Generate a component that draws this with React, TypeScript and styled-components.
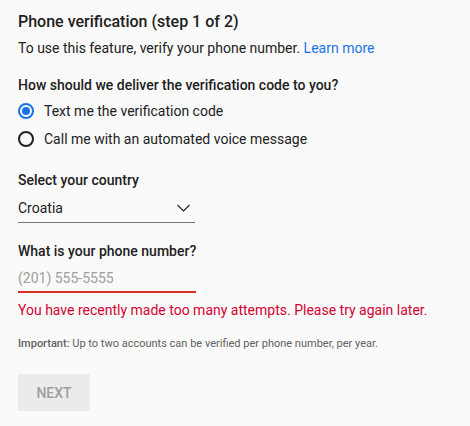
import styled, { createGlobalStyle } from "styled-components"

const GlobalStyle = createGlobalStyle`
  html, body {
    margin: 0;
    padding: 0;
    background: #fafafa;
  }
  body {
    font-family: Roboto, "Liberation Sans", Arial, sans-serif;
    color: #202124;
  }
`

const Page = styled.div`
  padding: 11px 18px 0 18px;
  display: flex;
  flex-direction: column;
`

const Title = styled.h1`
  margin: 0;
  font-size: 16px;
  font-weight: 500;
  line-height: 22px;
  color: #212121;
`

const Lead = styled.p`
  margin: 5px 0 0 0;
  font-size: 14px;
  line-height: 20px;
  color: #212121;

  a {
    color: #1a73e8;
    text-decoration: none;
  }
`

const Question = styled.h2<{ $top: number }>`
  margin: ${(p) => p.$top}px 0 0 0;
  font-size: 14px;
  font-weight: 500;
  line-height: 20px;
  color: #212121;
`

const RadioGroup = styled.div`
  display: flex;
  flex-direction: column;
  gap: 8px;
  margin-top: 6px;
`

const RadioRow = styled.label`
  display: flex;
  align-items: center;
  gap: 10px;
  font-size: 14px;
  line-height: 20px;
  color: #212121;
`

const RadioDot = styled.span<{ $checked?: boolean }>`
  box-sizing: border-box;
  width: 16px;
  height: 16px;
  border-radius: 50%;
  border: 2px solid ${(p) => (p.$checked ? "#1a73e8" : "#202124")};
  display: flex;
  align-items: center;
  justify-content: center;

  &::after {
    content: "";
    display: ${(p) => (p.$checked ? "block" : "none")};
    width: 8px;
    height: 8px;
    border-radius: 50%;
    background: #1a73e8;
  }
`

const Select = styled.div`
  width: 177px;
  margin-top: 8px;
  display: flex;
  align-items: center;
  justify-content: space-between;
  border-bottom: 1px solid #757575;
  padding: 0 5px 4px 0;
  box-sizing: border-box;
  font-size: 14px;
  line-height: 20px;
  color: #212121;
`

const Field = styled.div`
  width: 178px;
  margin-top: 7px;
  border-bottom: 2px solid #d93025;
  padding-bottom: 3px;
  font-size: 14px;
  line-height: 20px;
  color: #9e9e9e;
`

const ErrorText = styled.p`
  margin: 7px 0 0 0;
  font-size: 14px;
  line-height: 20px;
  color: #d50032;
`

const Note = styled.p`
  margin: 16px 0 0 0;
  font-size: 11px;
  line-height: 16px;
  color: #616161;

  b {
    font-weight: 500;
  }
`

const NextButton = styled.button`
  margin-top: 22px;
  align-self: flex-start;
  width: 72px;
  height: 37px;
  border: none;
  border-radius: 2px;
  background: #ebebeb;
  color: #9e9e9e;
  font-family: inherit;
  font-size: 14px;
  font-weight: 500;
`

function Chevron() {
  return (
    <svg width="13" height="8" viewBox="0 0 13 8" fill="none">
      <path d="M0.5 1l6 6 6-6" stroke="#212121" strokeWidth="1.1" />
    </svg>
  )
}

export default function App() {
  return (
    <>
      <GlobalStyle />
      <Page>
        <Title>Phone verification (step 1 of 2)</Title>
        <Lead>
          To use this feature, verify your phone number. <a href="#">Learn more</a>
        </Lead>
        <Question $top={17}>How should we deliver the verification code to you?</Question>
        <RadioGroup>
          <RadioRow>
            <RadioDot $checked />
            Text me the verification code
          </RadioRow>
          <RadioRow>
            <RadioDot />
            Call me with an automated voice message
          </RadioRow>
        </RadioGroup>
        <Question $top={21}>Select your country</Question>
        <Select>
          <span>Croatia</span>
          <Chevron />
        </Select>
        <Question $top={18}>What is your phone number?</Question>
        <Field>(201) 555-5555</Field>
        <ErrorText>You have recently made too many attempts. Please try again later.</ErrorText>
        <Note>
          <b>Important:</b> Up to two accounts can be verified per phone number, per year.
        </Note>
        <NextButton disabled>NEXT</NextButton>
      </Page>
    </>
  )
}
